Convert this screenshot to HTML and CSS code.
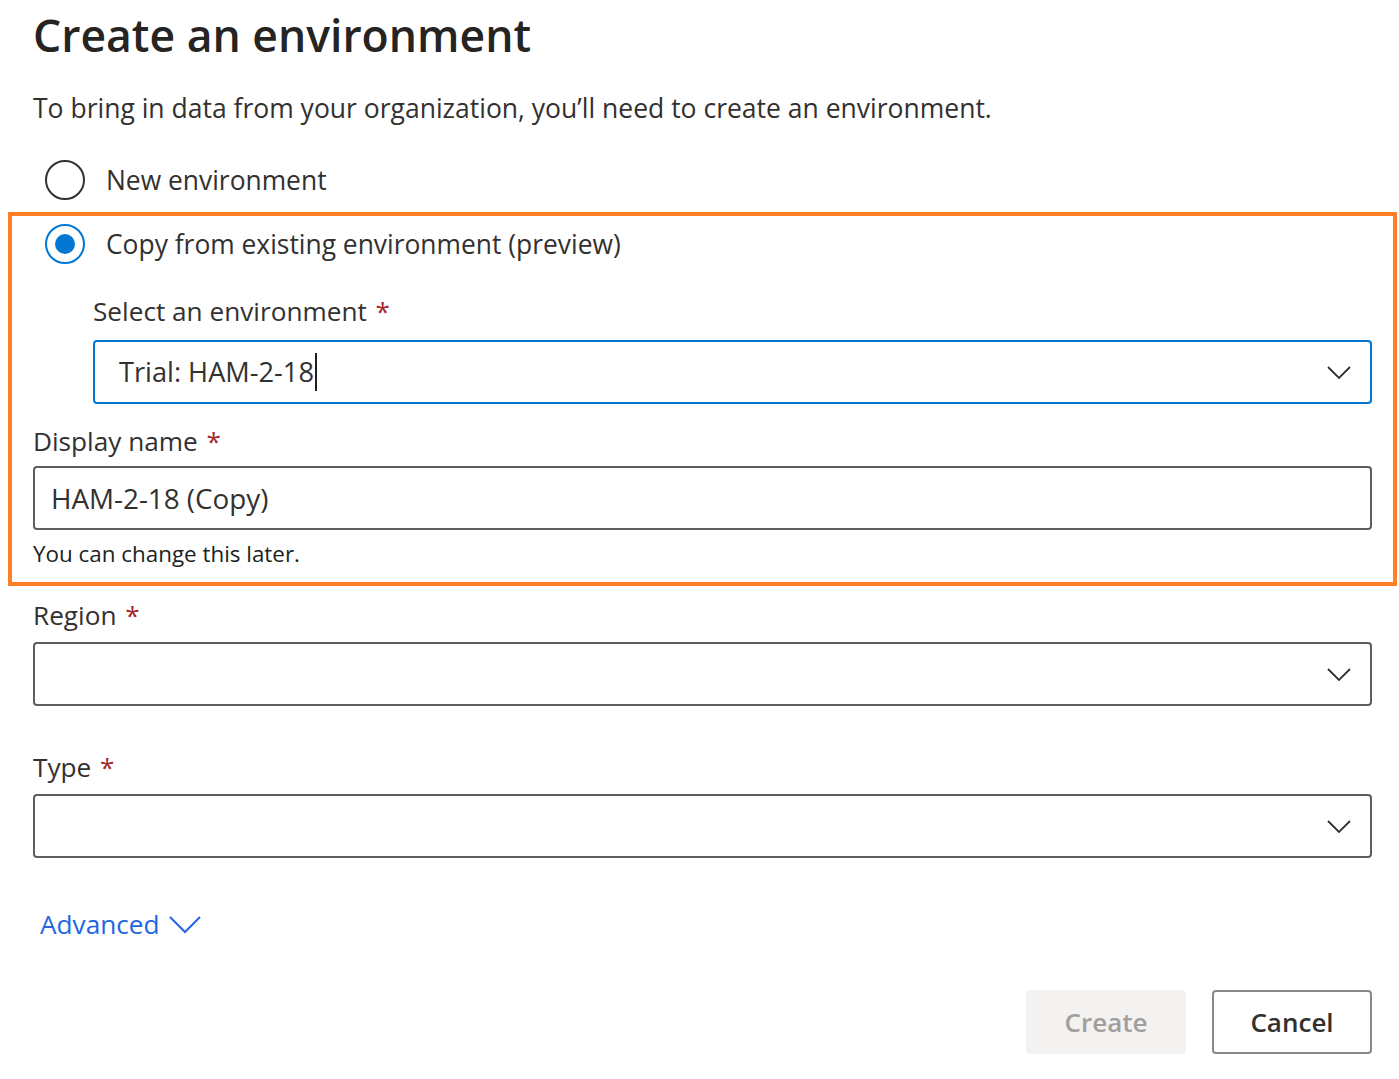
FILE: index.html
```html
<!DOCTYPE html>
<html lang="en">
<head>
<meta charset="utf-8">
<title>Create an environment</title>
<link rel="stylesheet" href="styles.css">
</head>
<body>
<div class="page">
  <h1 class="title">Create an environment</h1>
  <p class="intro">To bring in data from your organization, you’ll need to create an environment.</p>

  <div class="radio-row">
    <span class="radio"></span>
    <span class="radio-label">New environment</span>
  </div>

  <div class="highlight">
    <div class="radio-row radio-row--first">
      <span class="radio radio--checked"><span class="radio-dot"></span></span>
      <span class="radio-label">Copy from existing environment (preview)</span>
    </div>

    <div class="indent">
      <div class="label label--sub">Select an environment <span class="req">*</span></div>
      <div class="field field--focus">
        <span class="field-text">Trial: HAM-2-18</span><span class="caret"></span>
        <svg class="chev" width="24" height="14" viewBox="0 0 24 14"><polyline points="1,1 12,12 23,1" fill="none" stroke="#323130" stroke-width="1.8"/></svg>
      </div>
    </div>

    <div class="label label--display">Display name <span class="req">*</span></div>
    <div class="field field--input">
      <span class="field-text field-text--input">HAM-2-18 (Copy)</span>
    </div>
    <div class="help">You can change this later.</div>
  </div>

  <div class="label label--region">Region <span class="req">*</span></div>
  <div class="field field--region">
    <svg class="chev" width="24" height="14" viewBox="0 0 24 14"><polyline points="1,1 12,12 23,1" fill="none" stroke="#323130" stroke-width="1.8"/></svg>
  </div>

  <div class="label label--type">Type <span class="req">*</span></div>
  <div class="field field--type">
    <svg class="chev" width="24" height="14" viewBox="0 0 24 14"><polyline points="1,1 12,12 23,1" fill="none" stroke="#323130" stroke-width="1.8"/></svg>
  </div>

  <div class="advanced">
    <span class="advanced-text">Advanced</span>
    <svg class="adv-chev" width="32" height="18" viewBox="0 0 32 18"><polyline points="1,1 16,16 31,1" fill="none" stroke="#2266e3" stroke-width="2"/></svg>
  </div>

  <div class="actions">
    <button class="btn btn--primary" disabled>Create</button>
    <button class="btn btn--default">Cancel</button>
  </div>
</div>
</body>
</html>
```

FILE: styles.css
```css
html, body {
  margin: 0;
  padding: 0;
  background: #ffffff;
}

body {
  font-family: "Open Sans", "Noto Sans", "Liberation Sans", sans-serif;
  color: #323130;
}

.page {
  width: 1339px;
  padding-left: 33px;
}

.title {
  margin: 0;
  height: 70px;
  font-size: 44.5px;
  font-weight: 600;
  line-height: 70px;
  color: #252423;
}

.intro {
  margin: 18px 0 0;
  font-size: 26.5px;
  line-height: 40px;
  color: #323130;
}

.radio-row {
  display: flex;
  align-items: center;
  height: 40px;
  margin-top: 32px;
  margin-left: 12px;
}

.radio-row--first {
  margin-top: 8px;
}

.radio {
  box-sizing: border-box;
  width: 40px;
  height: 40px;
  border: 2px solid #323130;
  border-radius: 50%;
  display: flex;
  align-items: center;
  justify-content: center;
  flex: none;
}

.radio--checked {
  border-color: #0078d4;
}

.radio-dot {
  width: 20px;
  height: 20px;
  border-radius: 50%;
  background: #0078d4;
}

.radio-label {
  margin-left: 21px;
  font-size: 26.4px;
  line-height: 40px;
  color: #323130;
}

.highlight {
  margin: 12px -25px 0;
  border: 4px solid #ff7f27;
  padding: 0 21px 11px;
}

.highlight .radio-row {
  margin-left: 12px;
}

.indent {
  padding-left: 60px;
}

.label {
  font-size: 26.2px;
  line-height: 40px;
  color: #323130;
}

.req {
  color: #a4262c;
  margin-left: 2px;
}

.label--sub {
  margin-top: 27px;
}

.label--display {
  margin-top: 17px;
}

.label--region {
  margin-top: 9px;
}

.label--type {
  margin-top: 41px;
}

.field {
  box-sizing: border-box;
  height: 64px;
  border: 2px solid #605e5c;
  border-radius: 4px;
  display: flex;
  align-items: center;
  position: relative;
  padding-left: 24px;
}

.field--focus {
  margin-top: 9px;
  border-color: #0078d4;
}

.field--input {
  margin-top: 5px;
  padding-left: 16px;
}

.field--region {
  margin-top: 7px;
}

.field--type {
  margin-top: 7px;
}

.field-text {
  font-size: 27.2px;
  line-height: 40px;
  color: #323130;
}

.field-text--input {
  font-size: 27.8px;
}

.caret {
  display: inline-block;
  width: 2px;
  height: 38px;
  background: #201f1e;
  margin-left: 1px;
}

.chev {
  position: absolute;
  right: 19px;
  top: 24px;
}

.help {
  margin-top: 7px;
  font-size: 22.4px;
  line-height: 34px;
  color: #201f1e;
}

.advanced {
  display: flex;
  align-items: center;
  margin-top: 46px;
  margin-left: 7px;
  height: 40px;
}

.advanced-text {
  font-size: 26.2px;
  line-height: 40px;
  color: #2266e3;
}

.adv-chev {
  margin-left: 9px;
  margin-top: 2px;
}

.actions {
  display: flex;
  justify-content: flex-end;
  gap: 26px;
  margin-top: 46px;
}

.btn {
  box-sizing: border-box;
  width: 160px;
  height: 64px;
  border-radius: 4px;
  font-family: "Open Sans", "Noto Sans", "Liberation Sans", sans-serif;
  font-size: 26px;
  font-weight: 600;
}

.btn--primary {
  background: #f3f2f1;
  border: none;
  color: #a19f9d;
}

.btn--default {
  background: #ffffff;
  border: 2px solid #8a8886;
  color: #323130;
}
```
